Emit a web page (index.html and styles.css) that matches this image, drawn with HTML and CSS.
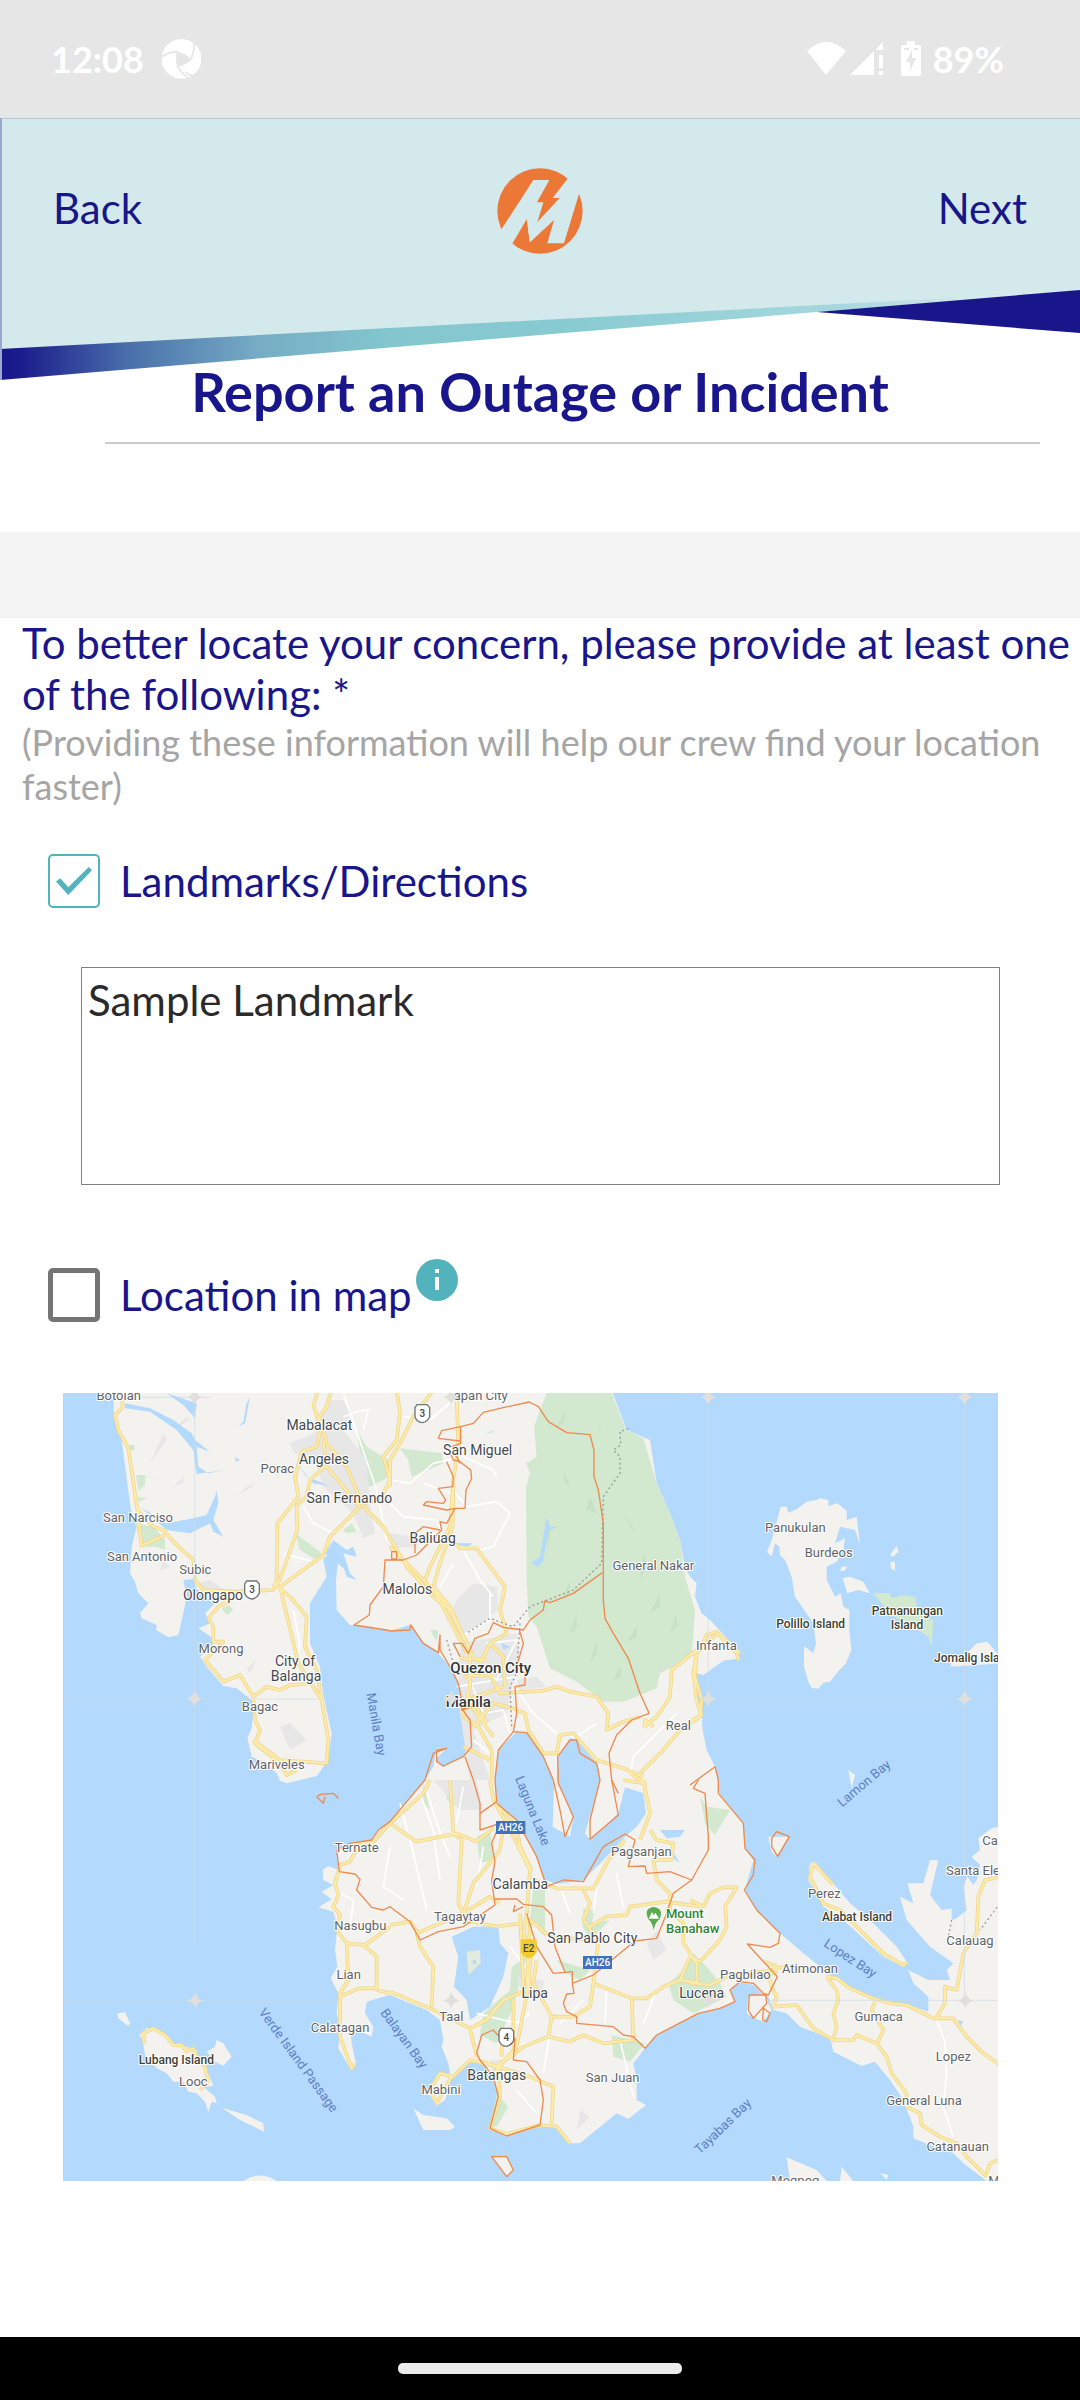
FILE: index.html
```html
<!DOCTYPE html>
<html lang="en">
<head>
<meta charset="utf-8">
<meta name="viewport" content="width=device-width, initial-scale=1">
<title>Report an Outage or Incident</title>
<link rel="stylesheet" href="styles.css">
</head>
<body>
<div class="status">
  <div class="status-group">
    <span>12:08</span>
    <svg class="shutter" viewBox="0 0 114 117" aria-hidden="true">
      <circle cx="57" cy="58" r="58" fill="#fff"/>
      <path d="M43 39Q66 38 84 60Q72 76 45 82Q38 60 43 39Z" fill="#e6e6e6"/>
      <path d="M0 52Q20 36 50 38M92 8Q98 38 80 66M44 78Q58 104 82 116M68 96Q88 112 104 106" fill="none" stroke="#e6e6e6" stroke-width="5"/>
    </svg>
  </div>
  <div class="status-group status-right">
    <svg class="signal" viewBox="0 0 76 36" aria-hidden="true">
      <path d="M0 10Q19-8 39 10L19 34ZM43 34L67 10V34ZM69 8L76 1V9H69ZM72 14h4v13h-4zM72 30h4v4h-4z" fill="#fff"/>
    </svg>
    <svg class="battery" viewBox="0 0 20 36" aria-hidden="true">
      <path d="M6 0h8v4h4q2 0 2 2v27q0 2-2 2H2q-2 0-2-2V6q0-2 2-2h4z" fill="#fff"/>
      <path d="M11 9L5 21h4v9l6-13h-4zM3 7h5v2H3zM13 7h4v2h-4z" fill="#e6e6e6"/>
    </svg>
    <span>89%</span>
  </div>
</div>

<header class="header">
  <svg class="wave" viewBox="0 118 1080 262" preserveAspectRatio="none" aria-hidden="true">
    <defs>
      <linearGradient id="band" x1="0" x2="1080" y1="0" y2="0" gradientUnits="userSpaceOnUse">
        <stop offset="0" stop-color="#18168a"/>
        <stop offset=".02" stop-color="#1b1d8c"/>
        <stop offset=".12" stop-color="#4a70ab"/>
        <stop offset=".24" stop-color="#76adc5"/>
        <stop offset=".36" stop-color="#83c6cd"/>
        <stop offset=".52" stop-color="#88cad1"/>
        <stop offset=".78" stop-color="#a6d8de"/>
        <stop offset=".9" stop-color="#d4e9eb"/>
      </linearGradient>
    </defs>
    <path d="M0 118H1080V291L0 350Z" fill="#d4e9eb"/>
    <path d="M0 349L1080 291L817 312L540 335L0 380Z" fill="url(#band)"/>
    <path d="M817 312L1080 290V333Z" fill="#18168a"/>
    <path d="M0 118.500H1080" stroke="#b0c8dc"/>
    <path d="M1 118V380" stroke="#9ba6d2" stroke-width="2"/>
  </svg>
  <nav class="bar">
    <button class="link" type="button">Back</button>
    <svg class="logo" viewBox="57 55 258 256" role="img" aria-label="M">
      <circle cx="186" cy="183" r="128" fill="#ec7837"/>
      <path d="M50 270L71 237L166 90H214L177 157H196L179 214L156 277L146 208L104 279L80 310Z" fill="#d4e9eb"/>
      <path d="M179 215L245 144H224L268 87L300 60L330 100L302 135L258 280H208L228 210L156 277L150 240Z" fill="#d4e9eb"/>
    </svg>
    <button class="link link-next" type="button">Next</button>
  </nav>
  <h1>Report an Outage or Incident</h1>
</header>

<main>
  <section class="intro">
    <p class="lead">To better locate your concern, please provide at least one of the following: *</p>
    <p class="hint">(Providing these information will help our crew find your location faster)</p>
  </section>
  <div class="check">
    <input type="checkbox" id="landmarks" checked>
    <label for="landmarks">Landmarks/Directions</label>
  </div>
  <textarea aria-label="Landmarks/Directions">Sample Landmark</textarea>
  <div class="check">
    <input type="checkbox" id="inmap">
    <label for="inmap">Location in map</label>
    <button class="info" type="button" aria-label="About location in map">
      <svg viewBox="0 0 42 42" aria-hidden="true"><circle cx="21" cy="21" r="21" fill="#52b3bc"/><path d="M19 10h4v4h-4zM19 18h4v13h-4z" fill="#fff"/></svg>
    </button>
  </div>

  <svg class="map" viewBox="39 39 2805 2364" role="img" aria-label="Map of Manila and nearby provinces">
    <defs>
      <g id="roads">
        <path d="M215 30L218 80L195 105L205 150L235 205L262 390L310 440L340 450L375 490L430 540L435 600L460 630L560 635L670 630L680 600L682 430L745 350L735 290L755 215L800 200L812 150L800 105L790 75L805 30M845 30L830 80L808 110L830 190L890 260L940 380L1000 440L1070 560L1150 650L1200 690L1270 830M262 390L275 497L345 465M820 180L830 260L930 380L840 470L820 525L690 620M830 255L780 300L770 350L740 375L742 450L700 570L680 620M670 610L720 650L770 710L765 800L800 870L815 960L835 1080L830 1150L690 1140L610 1080M690 620L745 850L815 960M540 660L505 680L475 715L490 740L490 785L520 785L465 840L520 905L570 885L610 950L650 920L690 930L720 915L770 912M610 960L615 1020L630 1050L615 1090L690 1150L710 1185L740 1170M1040 30L1050 100L1040 180L1000 230L1020 300L990 360L940 370M1150 30L1090 110L1050 190L1020 240L1020 320"/>
        <path transform="translate(1020)" d="M200 50L205 200L190 300L180 440L120 560L105 600M185 480L210 505L260 505L300 560L345 620L330 690L350 760L300 790L270 850L235 900M190 310L188 440L150 550L130 620L180 680L240 810L240 920L220 1010L265 1040L305 1110L305 1200M130 630L170 700L230 820M0 500L140 640L180 690L250 830M300 790L340 830L345 920M210 835L290 840M220 890L300 885L330 940L460 932L500 920L540 935L620 950L655 1000L650 1050L700 1025L750 1010M250 1040L310 970L370 985L405 1000L415 1050L460 1120L500 1120L510 1065L550 1060L620 1140L700 1165L760 1190M340 920L230 960L310 1070M230 940L290 1030M220 1100L300 1140M760 1040L800 1010L840 950L845 870L920 810L985 760L1050 820M750 1180L820 1110L870 1050L930 1010M765 1045L765 1020L790 1040M920 820L915 890L935 960L930 1010"/>
        <path transform="translate(1020 1200)" d="M180 0L190 160L215 180L205 370L220 400L300 350L330 370M120 0L100 40L0 130L80 185L200 160L260 185L310 145M300 0L310 60L350 130L420 270L410 400L400 460L425 500L415 620L380 800L310 880M340 140L330 210L250 310L220 400L80 460L90 500L130 560L125 680M0 435L60 425L85 460M220 420L320 440L390 430M310 60L380 140L390 200L425 270M0 635L120 685L240 745L260 830M240 745L290 720L340 660L410 630L420 420L480 470L600 480M430 300L500 325L610 325L655 240L705 180M580 330L600 370L580 420L625 480L610 610L600 680L550 710L485 710L430 610L440 540M485 710L475 770L400 800L360 830L320 860L240 840L190 890L150 880L120 930L140 970L185 890M475 770L540 785L580 765L640 790L730 780L725 655L610 610M730 655L770 655L820 620L870 600L930 610M600 440L650 410L710 405L720 380L830 365L930 380M750 180L780 100L760 0M780 150L800 180L850 190L845 240L790 240L800 300L840 340L840 390L880 430L880 490L920 550L920 610L870 600L900 530M325 850L330 950L300 1045L350 1062L450 1035L500 1040L540 1090M260 840L420 890L490 920L485 1030M370 830L370 660M390 400L400 620M335 830L335 740M700 0L765 10L720 -20"/>
        <path transform="translate(1920 0)" d="M0 825L30 810L50 765L80 755L140 820L145 840M20 820L10 880L20 960L35 1005L0 1025"/>
        <path transform="translate(0 1200)" d="M1020 130L970 185L930 190L900 245L870 255L855 310L865 345L850 380L870 405L860 450L890 490L945 495L1020 440M890 490L895 600L870 640L870 770L905 865L915 850M870 650L925 625L980 625L980 530L940 495M980 630L1020 640M283 790L280 760L310 745L345 765L370 795L395 795L410 815L430 805L445 840L465 860L475 905L450 930"/>
        <path transform="translate(1920 1200)" d="M0 530L30 545L90 480L110 440L105 380L140 322L100 322L60 340L40 380L0 360M0 610L60 615L120 585L220 575L280 560M225 545L260 560L255 580L235 580L245 620L260 650L250 680L320 675L370 745L430 780L490 780L500 765L560 790L590 830L605 880L650 940L650 980L690 1000L695 1035L750 1070L800 1090L830 1130L890 1190M410 590L440 630L445 660L430 700L440 740L430 775M410 590L440 595L480 625L550 655L600 670L650 675L730 715L790 715L830 770L880 820L930 855M555 665L545 690L580 750L560 795M740 710L765 670L765 620L800 630L820 520L860 460L865 350L885 300L925 292M370 250L430 315M370 250L360 290L400 370L450 390L520 460L580 520L640 555L652 548M890 1180L900 1150L925 1140"/>
      </g>
    </defs>
    <rect x="39" y="39" width="2805" height="2364" fill="#b3d9fc"/>
    <g fill="#f3f2ef">
      <path d="M190 30L192 110L215 180L240 370L245 400L260 440L245 500L240 580L255 605L265 640L295 670L270 700L275 715L320 735L318 750L355 772L385 765L400 700L410 650L400 600L430 598L440 625L470 655L500 665L465 700L480 730L445 745L480 768L495 785L450 830L470 860L520 918L560 925L605 960L610 1000L605 1045L592 1075L605 1130L640 1145L680 1180L690 1200L712 1210L800 1188L835 1140L845 1060L825 970L815 910L810 860L780 790L780 670L830 590L820 540L838 500L870 510L862 560L858 600L860 690L900 735L912 735L1020 753L1080 735L1120 790L1165 820L1200 860L1225 910L1235 960L1260 1020L1260 1090L1240 1130L1180 1162L1155 1140L1190 1105L1160 1105L1150 1160L1125 1200L1020 1325L985 1350L965 1380L900 1390L860 1410L865 1470L835 1458L818 1470L820 1500L850 1515L815 1535L845 1558L805 1582L850 1595L862 1640L855 1710L862 1760L842 1795L865 1840L860 1900L870 1940L865 2005L900 2065L918 2050L905 1990L900 1940L965 1970L970 1940L945 1900L950 1865L1000 1850L1020 1845L1080 1870L1130 1890L1170 1920L1180 1980L1175 2000L1195 2050L1200 2080L1160 2090L1135 2140L1160 2178L1185 2160L1205 2090L1260 2040L1300 2050L1330 2100L1345 2140L1340 2200L1320 2245L1370 2268L1470 2235L1520 2245L1560 2290L1590 2290L1645 2245L1700 2200L1735 2217L1788 2175L1760 2160L1760 2100L1750 2050L1785 2005L1820 1965L1945 1900L2010 1885L2055 1865L2040 1830L2070 1805L2110 1815L2135 1840L2155 1850L2170 1890L2210 1900L2250 1940L2340 1975L2350 2015L2435 2058L2475 2045L2520 2100L2560 2160L2590 2240L2590 2275L2640 2295L2710 2320L2740 2350L2810 2403L2850 2403V1340L2825 1345L2785 1375L2790 1410L2765 1430L2790 1455L2780 1500L2770 1515L2752 1490L2740 1520L2750 1590L2720 1615L2705 1620L2705 1585L2675 1590L2640 1545L2665 1440L2640 1440L2620 1510L2572 1510L2590 1570L2550 1550L2570 1620L2640 1700L2710 1750L2690 1770L2700 1800L2635 1800L2575 1770L2590 1810L2635 1850L2635 1895L2570 1872L2480 1858L2360 1800L2260 1720L2190 1660L2120 1590L2085 1530L2110 1440L2085 1405L2080 1330L2008 1240L2005 1200L1995 1160L1970 1110L1958 1050L1955 1000L1940 960L1940 880L1960 885L2020 842L2070 835L2045 790L1980 720L1955 700L1935 650L1940 610L1920 590L1905 560L1890 480L1860 400L1820 310L1800 180L1730 150L1685 30Z"/>
      <path d="M2183 415L2192 380L2210 380L2215 398L2240 388L2270 365L2300 360L2310 354L2335 360L2335 378L2362 370L2390 392L2390 420L2420 410L2430 495L2415 450L2370 440L2355 490L2385 475L2380 510L2360 545L2330 560L2330 600L2355 650L2372 640L2380 680L2398 690L2398 750L2404 810L2388 850L2360 880L2340 905L2320 908L2305 926L2285 924L2275 905L2262 860L2262 798L2290 820L2298 790L2290 730L2235 650L2225 590L2205 540L2190 525L2188 500L2175 490L2165 530L2151 515L2165 480Z"/>
      <path d="M2378 595L2400 590L2440 605L2460 640L2425 630L2392 640ZM2520 525L2540 497L2545 515L2530 530ZM2522 545L2535 545L2535 572L2522 565ZM2703 860L2705 840L2750 820L2780 790L2812 785L2850 830V850ZM2376 560L2392 560L2385 572L2370 572Z"/>
      <path d="M202 1900L225 1897L240 1930L235 1938L205 1915ZM268 1965L290 1945L320 1945L370 1990L440 2010L445 2045L475 2080L490 2118L460 2120L495 2150L500 2170L485 2165L475 2195L465 2165L440 2140L415 2135L400 2105L370 2105L350 2080L320 2065L285 2025L278 1980ZM470 2015L495 2000L500 1980L520 1990L545 2030L520 2057L495 2045ZM515 2183L590 2205L640 2230L642 2255L570 2220ZM580 2403Q630 2370 680 2403Z"/>
      <path d="M1090 2185L1120 2205L1190 2215L1215 2240L1200 2250L1120 2250ZM1325 2330L1370 2330L1390 2370L1370 2390ZM2155 1370L2215 1370L2180 1430L2165 1415ZM2280 1450L2295 1445L2400 1570L2460 1620L2540 1700L2573 1750L2560 1762L2500 1730L2380 1620L2320 1580L2275 1500ZM2095 1850L2140 1840L2165 1890L2140 1925L2115 1915L2090 1900ZM2210 2332L2300 2370L2330 2403H2220ZM2375 2360L2410 2403H2370ZM2490 2380L2515 2385L2510 2400ZM2395 1170L2415 1185L2405 1225ZM685 1200L712 1210L700 1195Z"/>
    </g>
    <g fill="#d2e8cf">
      <path d="M1490 39H1685L1728 150L1780 175L1820 310L1860 400L1890 480L1905 590L1935 690L1925 830L1830 880L1820 925L1720 965L1660 965L1580 905L1500 865L1460 740L1435 710L1430 600L1428 320L1440 280L1428 250L1460 230L1452 140Z"/>
      <path d="M258 285H285V315L265 332ZM240 195h14v15h-14ZM262 350L290 355L268 365ZM255 430L310 440L345 480L345 510L320 500L275 500ZM515 685L535 675L550 690L530 705ZM735 460L810 515L818 535L790 535L750 510ZM920 150L950 200L1015 240L1010 295L960 320L915 290L930 230ZM1050 205L1175 220L1180 250L1085 290L1075 240ZM1305 160L1335 150L1325 160ZM1140 750L1165 750L1160 785ZM880 450L905 430L920 455L890 460Z"/>
      <path d="M2470 640L2520 640L2525 655L2555 645L2597 650L2600 700L2650 720L2645 800L2635 770L2590 740L2540 715L2510 690Z"/>
      <path d="M1120 1210L1140 1290L1120 1270ZM1190 1205L1230 1240L1235 1290L1190 1260ZM1280 1370L1320 1350L1330 1440L1290 1450ZM1450 1520L1485 1530L1485 1670L1440 1620ZM1600 1585L1635 1590L1625 1630L1680 1620L1620 1680L1598 1640ZM1520 1740L1620 1770L1590 1800L1550 1780ZM1385 1760L1430 1730L1390 1880L1340 1990L1290 1965L1300 1900L1380 1830ZM1685 1965L1785 1990L1740 2045L1690 2030ZM1340 2140L1375 2180L1340 2240L1320 2240ZM1890 1780L1930 1720L1970 1760L2010 1810L2030 1850L1930 1900L1870 1860L1855 1810ZM1970 1280L2040 1290L1995 1365L1965 1330L1950 1250Z"/>
    </g>
    <g fill="#e7e7e8">
      <path d="M720 190L790 160L830 60L880 60L900 100L880 150L950 240L960 380L975 460L940 475L910 400L820 320L800 260L730 215ZM1220 660L1270 610L1340 620L1345 690L1280 740L1235 770L1190 720ZM1230 790L1400 760L1410 830L1390 900L1370 1000L1270 1050L1320 1200H1260L1230 1000L1225 900ZM1400 900L1460 890L1490 920L1410 930ZM1020 460L1100 470L1100 500L1030 505ZM440 610L480 600L540 640L500 660ZM1150 1200H1280L1300 1290H1230ZM1400 1790L1480 1800L1480 1850L1420 1850ZM1320 2040L1360 2040L1350 2090L1330 2085ZM1790 1690L1820 1650L1850 1710L1810 1740Z"/>
      <path d="M340 160L350 180L300 250ZM410 110L420 120L370 150ZM590 320L620 310L560 350ZM400 290L370 320L400 310ZM620 840L600 880L590 865ZM690 1040L720 1030L770 1080L720 1110ZM1590 2190L1620 2210L1580 2250ZM340 540L360 560L330 570Z"/>
    </g>
    <g fill="#c6e1c5">
      <path d="M1550 90L1520 140L1540 130ZM1640 120L1660 180L1650 140ZM1540 270L1560 320L1545 310ZM1620 350L1640 400L1610 390ZM1500 430L1480 500L1500 480ZM1720 400L1760 460L1740 440ZM1780 520L1770 600L1790 560ZM1580 700L1560 760L1580 740ZM1640 780L1620 850L1640 820ZM1830 640L1800 700L1830 680ZM1760 740L1730 790L1760 770ZM1880 700L1860 760L1880 740ZM1710 860L1690 900L1715 890ZM1560 600L1540 660L1560 640Z"/>
    </g>
    <g fill="#b3d9fc">
      <path d="M1400 1055L1345 1110L1335 1200L1340 1270L1400 1320L1460 1430L1485 1510L1540 1510L1600 1500L1660 1440L1725 1370L1760 1340L1788 1300L1780 1240L1725 1222L1705 1300L1620 1380L1605 1360L1650 1200L1640 1150L1580 1080L1560 1075L1525 1130L1520 1200L1570 1310L1560 1370L1508 1340L1512 1200L1480 1130L1430 1060Z"/>
      <path d="M1205 1670L1270 1640L1345 1640L1350 1690L1375 1720L1360 1790L1320 1880L1260 1920L1250 1860L1212 1820L1225 1730Z"/>
      <path d="M1490 410L1500 440L1525 442L1495 450L1480 540L1465 560L1445 550L1470 530ZM1355 790L1380 800L1360 810ZM225 70L300 85L370 120L425 160L435 180L480 215L440 200L445 260L475 280L525 270L440 282L430 210L380 150L300 95L225 85ZM350 40L440 70L435 115L400 75ZM590 70L600 50L585 130L565 140L580 125ZM270 380L350 430L430 415L470 405L495 350L500 330L505 370L490 420L520 470L490 455L480 430L420 460L350 450ZM255 285L340 300L280 290ZM555 230L570 240L557 245ZM850 480L890 510L910 500L920 530L880 520L900 580L850 540L820 530ZM880 560L920 600L890 590ZM740 250L770 290L840 318L790 310ZM1830 1350L1905 1350L1890 1370L1850 1375ZM1865 1410L1890 1450L1870 1435ZM1205 490L1270 490L1250 500Z"/>
      <path d="M2725 1920L2740 1925L2730 1940ZM2070 1810L2105 1818L2090 1850L2060 1830Z"/>
    </g>
    <path d="M1250 1715L1290 1710L1292 1750L1255 1785Z" fill="#e2ecdd"/>
    <path d="M1268 1740h10v12h-10z" fill="#b3d9fc"/>
    <g fill="none" stroke="#fff" stroke-width="5" stroke-linejoin="round">
      <path d="M880 39L980 330L1010 480M880 110L920 95L955 90L940 150M1020 300L1080 310L1150 250L1240 230L1330 270L1340 290M1020 370L1060 410L1160 420L1180 480M1200 320L1250 380L1340 365L1380 400L1330 500L1290 510M1240 510L1290 600L1330 650M1210 550L1170 620M1120 310L1220 345M1230 770L1320 720L1320 640M760 380L790 430L850 460M700 520L790 545L830 525M730 690L750 790L740 840M1060 110L1140 120L1210 60M1310 790L1400 780L1340 900L1290 860M1260 900L1300 1000L1360 990L1380 1060M1220 920L1400 890M1400 930L1450 1000L1520 1060L1580 1070L1640 1030M1880 1000L1750 1130L1740 1190M1270 1080L1320 1120"/>
      <path d="M1110 1240L1150 1350L1170 1500M1050 1270L1090 1420L1130 1590M1130 1230L1160 1330L1200 1430M1240 1220L1220 1330M1020 1400L1000 1520L1060 1560M870 1540L910 1560L900 1650M1300 1400L1280 1520M1480 1500L1530 1520L1560 1600M1640 1520L1630 1600M1700 1480L1720 1580M1530 1930L1600 1860M1670 1830L1665 1930M1780 1930L1820 1830M1500 1960L1480 2080M1380 1700L1440 1780M1280 1900L1400 1930L1440 1900M1710 1980L1750 2150M2660 1920L2685 1985L2690 2080L2680 2180L2710 2270M1380 2000L1480 1980M1400 2130L1460 2200"/>
    </g>
    <use href="#roads" class="road-edge"/>
    <use href="#roads" class="road-fill"/>
    <g fill="none" stroke="#9a9a9a" stroke-width="4" stroke-dasharray="6 8">
      <path d="M1735 145L1710 155L1712 195L1690 210L1710 230L1710 280L1660 350L1655 550L1570 630L1440 680L1390 740L1320 715L1250 760M1410 730L1400 880L1380 920L1385 1040M1190 780L1210 850M2850 1570L2790 1650M2705 1620L2695 1670"/>
    </g>
    <g fill="none" stroke="#ed8a4e" stroke-width="4" stroke-linejoin="round">
      <path d="M1230 250L1205 200L1232 190V140L1270 130L1300 97L1350 85L1438 66L1465 80L1495 125L1550 158L1620 164L1632 210V290L1645 330L1660 430V660L1665 715L1690 760L1735 835L1770 940L1797 1000L1745 1020L1700 1065L1677 1120L1685 1200L1705 1240"/>
      <path d="M1232 140L1175 152L1165 175L1230 183M1195 205L1210 240L1230 245L1262 270L1265 295L1248 330L1245 385L1215 385L1190 430L1170 425L1175 450L1145 480L1100 525L1060 540L1005 540L1000 620L960 675L958 705L912 735L1010 750L1020 753M1190 245L1210 290L1208 320L1165 325L1187 360L1180 370L1130 365L1120 375L1190 390L1215 385M1095 520L1095 460L1120 440L1170 450M1025 515h15v22h-15z"/>
      <path d="M1657 578L1570 640L1500 668L1484 663L1480 690L1440 720L1420 750L1360 742L1330 728L1315 760L1275 775L1255 820L1235 790L1210 790L1230 830M1020 753L1080 750L1082 735L1120 790L1165 818L1170 765L1170 810L1200 860L1225 910L1235 960L1235 990L1300 970L1235 985L1260 1020L1265 1100L1240 1130L1180 1158L1160 1145L1160 1110L1190 1105L1150 1120L1125 1200L1020 1325L985 1350L965 1380L900 1390L860 1410L868 1475L915 1482L930 1498L920 1530L965 1582L1000 1590L1020 1580L1080 1625L1110 1680L1165 1655L1240 1640L1335 1575L1325 1500L1335 1445L1325 1390L1350 1330L1290 1350L1290 1270L1270 1200L1245 1130"/>
      <path d="M1408 750L1420 790L1400 860L1425 880L1425 915L1395 920L1400 1000L1390 1055L1345 1110L1335 1200L1340 1265L1290 1300M1390 1055L1430 1058L1480 1130L1510 1200L1530 1290L1545 1370L1570 1310L1525 1210L1523 1130L1560 1080L1580 1080L1590 1120L1640 1150L1650 1200L1620 1320L1620 1378L1705 1305L1685 1200M1340 1270L1400 1320L1460 1430L1490 1520L1540 1500L1600 1505L1660 1400L1725 1362L1755 1380L1735 1460L1785 1458L1790 1480L1860 1475L1925 1500L1975 1410V1370L1965 1240L1930 1225L1945 1200"/>
      <path d="M1335 1557L1400 1557L1420 1573L1480 1580L1505 1605L1515 1700L1545 1777L1567 1775V1810L1630 1785L1755 1683L1820 1675L1850 1600L1870 1540L1925 1500M1567 1810L1572 1840L1550 1842L1540 1870L1550 1895L1580 1910V1930L1690 1940L1720 1965L1750 1970L1785 2005L1820 1965L1945 1900L2010 1885L2055 1865L2040 1830L2070 1805L2110 1810L2140 1840L2155 1845L2182 1790L2092 1692L2160 1702L2185 1690L2190 1660L2120 1590L2083 1530L2110 1485L2115 1440L2085 1405L2080 1330L2005 1240V1200L1995 1160L1920 1215M1290 2040L1280 2020L1295 1965L1330 1950L1365 1990L1395 1975L1390 2040L1430 2045L1470 2100L1480 2160L1470 2235L1370 2268L1320 2245L1345 2150L1330 2090ZM1420 1580L1390 1595L1395 1575M1430 1600L1460 1700L1510 1780L1545 1777M1325 2330L1370 2330L1390 2370L1370 2390ZM2165 1375L2180 1355L2218 1370L2183 1430L2165 1400ZM2098 1845L2148 1845L2150 1870L2110 1915L2095 1890ZM2140 1885L2160 1900L2150 1925L2138 1920ZM800 1250L812 1243L850 1240L865 1255M800 1250L820 1270L825 1250"/>
    </g>
    <g stroke="#cbdbe4" stroke-width="2">
      <path d="M434 39V1695M2743 39V1860M1974 39V970M39 52H480M1900 52H2844M39 957H800M1950 957H2844M39 1861H865M2150 1861H2844"/>
    </g>
    <g class="town">
      <text x="206" y="60">Botolan</text><text x="1292" y="60">apan City</text>
      <text x="682" y="280">Porac</text><text x="264" y="427">San Narciso</text><text x="276" y="542">San Antonio</text>
      <text x="436" y="583">Subic</text><text x="513" y="820">Morong</text><text x="630" y="992">Bagac</text><text x="680" y="1167">Mariveles</text>
      <text x="1810" y="570">General Nakar</text><text x="1885" y="1050">Real</text><text x="1999" y="810">Infanta</text>
      <text x="2236" y="457">Panukulan</text><text x="2336" y="532">Burdeos</text>
      <text x="920" y="1416">Ternate</text><text x="931" y="1650">Nasugbu</text><text x="896" y="1796">Lian</text><text x="870" y="1956">Calatagan</text><text x="430" y="2117">Looc</text>
      <text x="1230" y="1622">Tagaytay</text><text x="1774" y="1427">Pagsanjan</text><text x="1204" y="1924">Taal</text><text x="1173" y="2143">Mabini</text><text x="1688" y="2107">San Juan</text>
      <text x="2323" y="1553">Perez</text><text x="2086" y="1797">Pagbilao</text><text x="2280" y="1780">Atimonan</text><text x="2486" y="1922">Gumaca</text><text x="2710" y="2042">Lopez</text>
      <text x="2622" y="2175">General Luna</text><text x="2723" y="2312">Catanauan</text><text x="2760" y="1696">Calauag</text><text x="2236" y="2416">Mogpog</text>
      <text x="2688" y="1486" class="start">Santa Elena</text><text x="2797" y="1395" class="start">Capalonga</text><text x="2815" y="2416" class="start">Mulanay</text>
    </g>
    <g class="city">
      <text x="808" y="150">Mabalacat</text><text x="822" y="253">Angeles</text><text x="898" y="368">San Fernando</text><text x="489" y="660">Olongapo</text>
      <text x="735" y="857">City of</text><text x="738" y="903">Balanga</text><text x="1283" y="224">San Miguel</text><text x="1148" y="488">Baliuag</text><text x="1072" y="642">Malolos</text>
      <text x="1411" y="1527">Calamba</text><text x="1627" y="1689">San Pablo City</text><text x="1454" y="1853">Lipa</text><text x="1340" y="2099">Batangas</text><text x="1955" y="1854">Lucena</text>
    </g>
    <g class="metro"><text x="1322" y="879">Quezon City</text><text x="1255" y="980">Manila</text></g>
    <g class="island">
      <text x="2282" y="745">Polillo Island</text><text x="2572" y="704">Patnanungan</text><text x="2571" y="747">Island</text><text x="2652" y="846" class="start">Jomalig Island</text>
      <text x="379" y="2052">Lubang Island</text><text x="2421" y="1623">Alabat Island</text>
    </g>
    <g class="park"><text x="1848" y="1613">Mount</text><text x="1848" y="1658">Banahaw</text></g>
    <g fill="#e0dfdc">
      <path id="star" d="M434 930Q439 952 458 957Q439 962 434 980Q429 962 410 957Q429 952 434 930Z"/>
      <use href="#star" y="-905"/><use href="#star" x="770"/><use href="#star" x="1541"/><use href="#star" x="2310"/>
      <use href="#star" x="770" y="-905"/><use href="#star" x="1541" y="-905"/><use href="#star" x="2310" y="-905"/>
      <use href="#star" x="2" y="905"/><use href="#star" x="770" y="905"/><use href="#star" x="1541" y="905"/><use href="#star" x="2312" y="905"/>
    </g>
    <g class="water">
      <text transform="translate(966 1035) rotate(80)">Manila Bay</text>
      <text transform="translate(1436 1297) rotate(68)">Laguna Lake</text>
      <text transform="translate(735 2048) rotate(54)">Verde Island Passage</text>
      <text transform="translate(1052 1983) rotate(54)">Balayan Bay</text>
      <text transform="translate(2450 1220) rotate(-40)">Lamon Bay</text>
      <text transform="translate(2394 1746) rotate(33)">Lopez Bay</text>
      <text transform="translate(2028 2248) rotate(-44)">Tayabas Bay</text>
    </g>
    <path d="M1811 1650Q1807 1627 1795 1618Q1780 1584 1811 1581Q1842 1584 1829 1618Q1815 1627 1811 1650Z" fill="#5aab4e"/>
    <path d="M1796 1616L1806 1596L1811 1606L1816 1598L1828 1616Z" fill="#fff"/>
    <g class="shields">
      <g fill="#fff" stroke="#70757a" stroke-width="4">
        <path id="shield" d="M590 603H620L628 612V640Q620 655 606 657Q590 655 584 640V612Z"/>
        <use href="#shield" x="511" y="-529"/><use href="#shield" x="763" y="1342"/>
      </g>
      <text x="606" y="640">3</text><text x="1117" y="112">3</text><text x="1369" y="1982">4</text>
      <path d="M1338 1323h88v39h-88zM1599 1728h87v39h-87z" fill="#4071c1"/>
      <g fill="#fff"><text x="1382" y="1353">AH26</text><text x="1643" y="1758">AH26</text></g>
      <path d="M1412 1678H1460V1715Q1455 1730 1436 1735Q1417 1730 1412 1715Z" fill="#f4cb2e"/>
      <text x="1436" y="1717">E2</text>
    </g>
  </svg>
</main>
<footer class="home"><span></span></footer>
</body>
</html>
```
FILE: styles.css
```css
* { box-sizing: border-box; }
body {
  margin: 0;
  min-height: 100vh;
  display: flex;
  flex-direction: column;
  background: #fff;
  color: #18168a;
  font-family: Lato, "Open Sans", sans-serif;
  font-size: 42px;
}
p, h1 { margin: 0; }
button { border: 0; padding: 0; background: none; color: inherit; font: inherit; }

.status {
  height: 118px;
  padding: 0 76px 0 51px;
  display: flex;
  justify-content: space-between;
  align-items: center;
  background: #e6e6e6;
  color: #fff;
  font-size: 36px;
  font-weight: 700;
}
.status-group { display: flex; align-items: center; gap: 18px; }
.status-right { gap: 12px; }
.shutter { width: 39px; height: 40px; }
.signal { width: 76px; height: 36px; margin-right: 6px; }
.battery { width: 20px; height: 36px; }

.header { position: relative; padding-bottom: 88px; }
.wave { position: absolute; inset: 0 0 auto; width: 100%; height: 262px; }
.bar {
  position: relative;
  height: 186px;
  padding: 0 53px;
  display: grid;
  grid-template-columns: 1fr auto 1fr;
  align-items: center;
}
.link { justify-self: start; padding-bottom: 6px; line-height: 50px; }
.link-next { justify-self: end; }
.logo { width: 86px; height: 86px; }
h1 {
  position: relative;
  margin: 0 40px 0 105px;
  padding: 54px 65px 16px 0;
  border-bottom: 2px solid #ccc;
  text-align: center;
  white-space: nowrap;
  font-size: 54px;
  line-height: 68px;
}

.intro { border-top: 86px solid #f3f3f3; padding: 0 8px 0 22px; }
.lead { line-height: 51px; }
.hint { color: #a5a5a5; font-size: 36px; line-height: 44px; }
.check {
  display: flex;
  align-items: center;
  gap: 20px;
  height: 54px;
  padding-left: 48px;
}
.intro + .check { margin-top: 46px; }
input[type="checkbox"] {
  appearance: none;
  width: 52px;
  height: 54px;
  margin: 0;
  border: 5px solid #757575;
  border-radius: 5px;
  display: grid;
  place-items: center;
}
input[type="checkbox"]:checked { border: 2px solid #52b3bc; }
input[type="checkbox"]:checked::after {
  content: "";
  width: 36px;
  height: 28px;
  background: #52b3bc;
  clip-path: polygon(0 52%, 12% 40%, 34% 72%, 91% 0, 100% 12%, 34% 100%);
}
textarea {
  display: block;
  width: calc(100% - 161px);
  height: 218px;
  margin: 59px 80px 83px 81px;
  padding: 7px 6px;
  border: 1px solid #808080;
  resize: none;
  color: #2a2a2a;
  font: inherit;
  line-height: 50px;
}
.info { margin: 0 0 30px -16px; width: 42px; height: 42px; }
.info svg { display: block; }

.map { display: block; width: calc(100% - 145px); margin: 71px 82px 0 63px; }
.map text { font-family: Roboto, sans-serif; font-size: 39px; text-anchor: middle; }
.map .start { text-anchor: start; }
.road-edge, .road-fill { fill: none; stroke: #f0d78c; stroke-width: 11px; stroke-linejoin: round; }
.road-fill { stroke: #fcebab; stroke-width: 6px; }
.town text, .city text, .metro text, .island text, .park text { paint-order: stroke; stroke: #fff; stroke-width: 6px; stroke-linejoin: round; }
.town { fill: #5f6368; }
.city { fill: #45484c; }
.map .city text { font-size: 42px; }
.metro { fill: #303236; font-weight: 500; }
.map .metro text { font-size: 45px; }
.island { fill: #3d4134; font-weight: 500; }
.map .island text { font-size: 36px; }
.park { fill: #2e8531; font-weight: 500; }
.map .park text { text-anchor: start; }
.water { fill: #5d7fc4; }
.map .water text { font-size: 39px; }
.shields { fill: #45484c; font-weight: 500; }
.map .shields text { font-size: 30px; }

.home {
  height: 63px;
  margin-top: auto;
  display: flex;
  align-items: center;
  justify-content: center;
  background: #000;
}
.home span { width: 284px; height: 11px; border-radius: 5px; background: #ebebeb; }
```
